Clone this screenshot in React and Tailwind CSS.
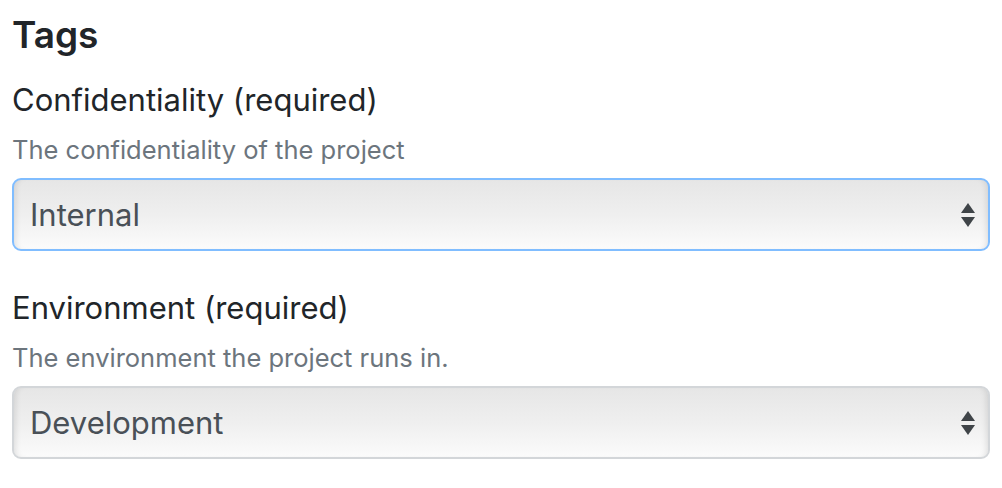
import React from 'react';

const Arrows = () => (
  <svg width="16" height="28" viewBox="0 0 16 28" className="shrink-0">
    <polygon points="8,2 15,12 1,12" fill="#3f4448" />
    <polygon points="1,16 15,16 8,26" fill="#3f4448" />
  </svg>
);

const FakeSelect = ({ value, focused }) => (
  <div
    className={`flex items-center justify-between h-[73px] pl-[16px] pr-[12px] rounded-[9px] border-2 bg-gradient-to-b from-[#e6e6e6] via-[#efefef] to-[#fbfbfb] shadow-[inset_6px_0_6px_-5px_rgba(0,0,0,0.12),inset_-6px_0_6px_-5px_rgba(0,0,0,0.12)] ${
      focused ? 'border-[#80bdff]' : 'border-[#d3d6d9]'
    }`}
  >
    <span className="text-[31px] text-[#495057] leading-none">{value}</span>
    <Arrows />
  </div>
);

const Field = ({ label, help, value, focused }) => (
  <div className="flex flex-col">
    <label className="text-[31px] leading-[38px] text-[#212529]">{label}</label>
    <p className="text-[25.5px] leading-[34px] text-[#6c757d] mt-[14px] mb-[11px]">{help}</p>
    <FakeSelect value={value} focused={focused} />
  </div>
);

export default function App() {
  return (
    <div className="w-[1002px] h-[488px] bg-white px-[12px] pt-[12px] font-['Inter',sans-serif]">
      <h4 className="text-[37px] leading-[46px] font-semibold text-[#212529] mb-[23px]">Tags</h4>
      <div className="w-[978px] flex flex-col gap-[38px]">
        <Field
          label="Confidentiality (required)"
          help="The confidentiality of the project"
          value="Internal"
          focused
        />
        <Field
          label="Environment (required)"
          help="The environment the project runs in."
          value="Development"
        />
      </div>
    </div>
  );
}
